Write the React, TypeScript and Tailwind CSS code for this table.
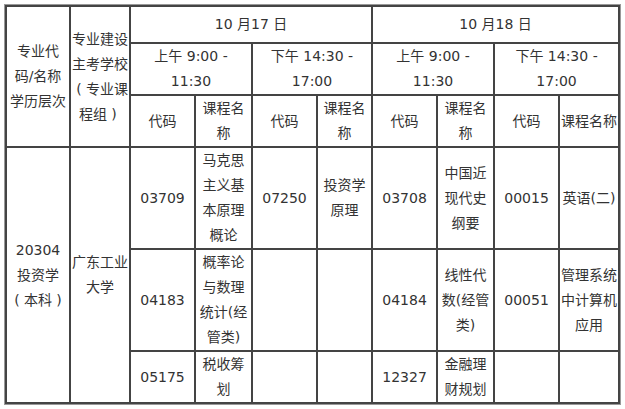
const cell = "border-r-2 border-b-2 border-[#444] text-center align-middle p-0 leading-[25px]";
const paren = "inline-block w-[14px] text-center";

export default function App() {
  return (
    <div className="bg-white w-[625px] h-[409px] pt-[4px] pl-[4px] text-[14px] text-[#333] font-['DejaVu_Sans','Noto_Sans_CJK_SC',sans-serif]">
      <div className="w-fit border border-[#999]">
        <table className="table-fixed border-separate border-spacing-0 w-[615px] border-l-2 border-t-2 border-[#444]">
          <colgroup>
            <col className="w-[64px]" />
            <col className="w-[60px]" />
            <col className="w-[65px]" />
            <col className="w-[57px]" />
            <col className="w-[65px]" />
            <col className="w-[55px]" />
            <col className="w-[65px]" />
            <col className="w-[57px]" />
            <col className="w-[65px]" />
            <col className="w-[60px]" />
          </colgroup>
          <tbody>
            <tr className="h-[37px]">
              <td rowSpan={3} className={cell}>
                专业代<br />码/名称<br />学历层次
              </td>
              <td rowSpan={3} className={cell}>
                专业建设<br />主考学校<br />
                <span className={paren}>(</span>专业课<br />
                程组<span className={paren}>)</span>
              </td>
              <td colSpan={4} className={cell}>10 月17 日</td>
              <td colSpan={4} className={cell}>10 月18 日</td>
            </tr>
            <tr className="h-[52px]">
              <td colSpan={2} className={cell}>上午 9:00 -<br />11:30</td>
              <td colSpan={2} className={cell}>下午 14:30 -<br />17:00</td>
              <td colSpan={2} className={cell}>上午 9:00 -<br />11:30</td>
              <td colSpan={2} className={cell}>下午 14:30 -<br />17:00</td>
            </tr>
            <tr className="h-[52px]">
              <td className={cell}>代码</td>
              <td className={cell}>课程名<br />称</td>
              <td className={cell}>代码</td>
              <td className={cell}>课程名<br />称</td>
              <td className={cell}>代码</td>
              <td className={cell}>课程名<br />称</td>
              <td className={cell}>代码</td>
              <td className={cell}>课程名称</td>
            </tr>
            <tr className="h-[102px]">
              <td rowSpan={3} className={cell}>
                20304<br />投资学<br />
                <span className={paren}>(</span>本科<span className={paren}>)</span>
              </td>
              <td rowSpan={3} className={cell}>
                广东工业<br />大学
              </td>
              <td className={cell}>03709</td>
              <td className={cell}>马克思<br />主义基<br />本原理<br />概论</td>
              <td className={cell}>07250</td>
              <td className={cell}>投资学<br />原理</td>
              <td className={cell}>03708</td>
              <td className={cell}>中国近<br />现代史<br />纲要</td>
              <td className={cell}>00015</td>
              <td className={cell}>英语(二)</td>
            </tr>
            <tr className="h-[102px]">
              <td className={cell}>04183</td>
              <td className={cell}>概率论<br />与数理<br />统计(经<br />管类)</td>
              <td className={cell}></td>
              <td className={cell}></td>
              <td className={cell}>04184</td>
              <td className={cell}>线性代<br />数(经管<br />类)</td>
              <td className={cell}>00051</td>
              <td className={cell}>管理系统<br />中计算机<br />应用</td>
            </tr>
            <tr className="h-[52px]">
              <td className={cell}>05175</td>
              <td className={cell}>税收筹<br />划</td>
              <td className={cell}></td>
              <td className={cell}></td>
              <td className={cell}>12327</td>
              <td className={cell}>金融理<br />财规划</td>
              <td className={cell}></td>
              <td className={cell}></td>
            </tr>
          </tbody>
        </table>
      </div>
    </div>
  );
}
